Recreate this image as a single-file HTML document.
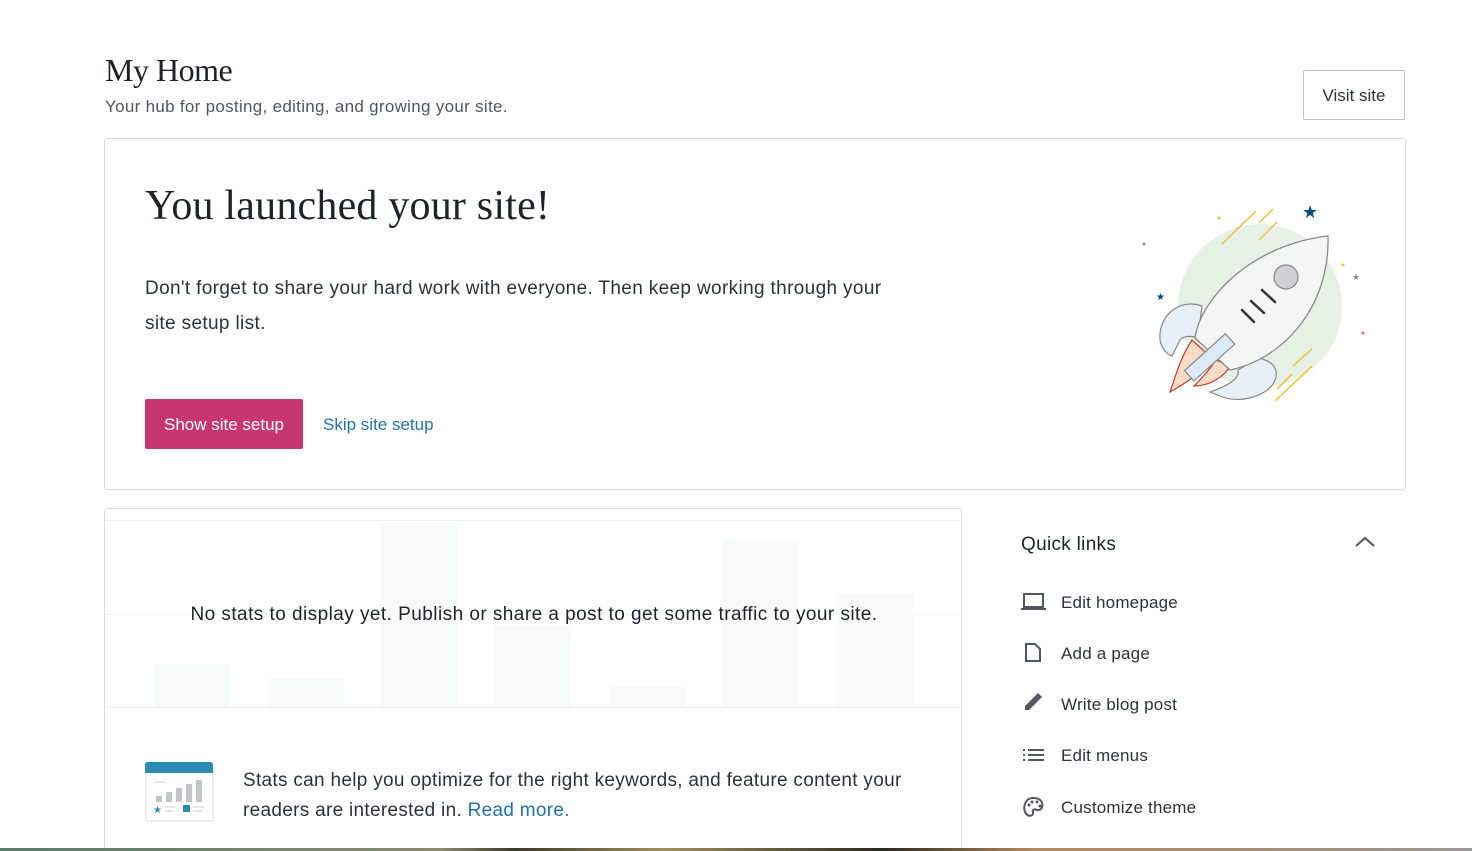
<!DOCTYPE html>
<html><head><meta charset="utf-8"><style>
*{box-sizing:border-box;margin:0;padding:0}
html,body{width:1472px;height:851px;overflow:hidden}
body{background:#fff;font-family:"Liberation Sans",sans-serif;color:#2c3338;position:relative}
.abs{position:absolute}
h1{font-family:"Liberation Serif",serif;font-weight:400}
</style></head><body>
<h1 class="abs" style="left:105px;top:52px;font-size:32px;color:#1d2327;letter-spacing:-0.5px">My Home</h1>
<div class="abs" style="left:105px;top:97px;font-size:17px;color:#50575e;letter-spacing:0.3px">Your hub for posting, editing, and growing your site.</div>
<div class="abs" style="left:1303px;top:70px;width:102px;height:50px;border:1px solid #c3c4c7;border-radius:2px;font-size:17px;color:#2c3338;text-align:center;line-height:50px">Visit site</div>

<div class="abs" style="left:104px;top:138px;width:1302px;height:352px;border:1px solid #dcdcde;border-radius:3px"></div>
<h1 class="abs" style="left:145px;top:182px;font-size:42px;color:#1d2327;letter-spacing:0.2px">You launched your site!</h1>
<div class="abs" style="left:145px;top:271px;width:770px;font-size:19px;line-height:35px;color:#2c3338;letter-spacing:0.35px">Don't forget to share your hard work with everyone. Then keep working through your site setup list.</div>
<div class="abs" style="left:145px;top:399px;width:158px;height:50px;background:#c9356e;border-radius:2px;color:#fff;font-size:17px;text-align:center;line-height:52px">Show site setup</div>
<div class="abs" style="left:323px;top:415px;font-size:17px;color:#2271b1">Skip site setup</div>

<svg class="abs" style="left:1130px;top:190px" width="250" height="230" viewBox="0 0 250 230">
<circle cx="130" cy="116" r="82" fill="#e6f0e6"/>
<g stroke="#f0c330" stroke-width="1.5"><line x1="92" y1="54" x2="126" y2="21"/><line x1="129" y1="33" x2="143" y2="19"/><line x1="129" y1="50" x2="147" y2="32"/><line x1="163" y1="176" x2="182" y2="159"/><line x1="147" y1="199" x2="162" y2="184"/><line x1="145" y1="211" x2="182" y2="176"/></g>
<text x="172" y="28" font-size="18" fill="#0a4b78" font-family="DejaVu Sans">★</text>
<text x="26" y="110" font-size="10" fill="#0a4b78" font-family="DejaVu Sans">★</text>
<text x="222" y="90" font-size="9" fill="#888" font-family="DejaVu Sans">★</text>
<circle cx="14" cy="54" r="1.5" fill="#c56fc5"/><circle cx="233" cy="143" r="1.5" fill="#c56fc5"/><circle cx="89" cy="28" r="1.5" fill="#f0c330"/><circle cx="213" cy="75" r="1.5" fill="#f0c330"/>
<path d="M72 116 C50 108 28 125 30 150 C32 160 38 165 42 166 L50 150 C54 145 62 146 68 148 Z" fill="#e8eff6" stroke="#888" stroke-width="1.2"/>
<path d="M90 206 C110 215 140 205 145 190 C150 178 140 170 128 168 L108 180 C110 188 100 195 80 202 Z" fill="#e8eff6" stroke="#888" stroke-width="1.2"/>
<path d="M62 150 C50 168 45 188 40 202 C58 192 72 182 84 170 Z" fill="#f7dcc8" stroke="#c0392b" stroke-width="1.2"/>
<path d="M86 170 C76 184 70 190 64 196 C80 196 95 186 100 176 Z" fill="#f7dcc8" stroke="#c0392b" stroke-width="1.2"/>
<path d="M198 46 C120 55 70 110 65 148 L100 180 C150 170 200 120 198 46 Z" fill="#f4f6f6" stroke="#888" stroke-width="1.3"/>
<rect x="52" y="160" width="55" height="14" fill="#dceaf6" stroke="#888" stroke-width="1.2" transform="rotate(-42 80 167)"/>
<circle cx="156" cy="87" r="12" fill="#d0d0d3" stroke="#888" stroke-width="1.2"/>
<g stroke="#333" stroke-width="2.5" stroke-linecap="round"><line x1="132" y1="100" x2="145" y2="112"/><line x1="121" y1="111" x2="134" y2="123"/><line x1="112" y1="120" x2="124" y2="132"/></g>
</svg>

<div class="abs" style="left:104px;top:508px;width:858px;height:343px;border:1px solid #dcdcde;border-bottom:none;border-radius:3px 3px 0 0;overflow:hidden">
<div class="abs" style="left:0;top:11px;width:858px;height:1px;background:#f0f0f0"></div>
<div class="abs" style="left:0;top:105px;width:858px;height:1px;background:#f0f0f0"></div>
<div class="abs" style="left:49px;top:155px;width:76px;height:43px;background:#f8f9f9"></div>
<div class="abs" style="left:163px;top:169px;width:76px;height:29px;background:#f8f9f9"></div>
<div class="abs" style="left:276px;top:14px;width:76px;height:184px;background:#f8f9f9"></div>
<div class="abs" style="left:390px;top:116px;width:76px;height:82px;background:#f8f9f9"></div>
<div class="abs" style="left:504px;top:177px;width:76px;height:21px;background:#f8f9f9"></div>
<div class="abs" style="left:618px;top:31px;width:76px;height:167px;background:#f8f9f9"></div>
<div class="abs" style="left:732px;top:84px;width:76px;height:114px;background:#f8f9f9"></div>
<div class="abs" style="left:0;top:198px;width:858px;height:1px;background:#eee"></div>
<div class="abs" style="left:0;top:95px;width:858px;text-align:center;font-size:19px;color:#1d2327;letter-spacing:0.45px">No stats to display yet. Publish or share a post to get some traffic to your site.</div>
<svg class="abs" style="left:38px;top:252px" width="72" height="62" viewBox="0 0 72 62">
<rect x="3" y="5" width="67" height="55" fill="#fff" stroke="#ddd"/>
<path d="M2 12 V4 Q2 1 5 1 H67 Q70 1 70 4 V12 Z" fill="#2b8bb5"/>
<line x1="12" y1="21" x2="22" y2="21" stroke="#ccc"/>
<g fill="#c3c4c7"><rect x="13" y="35" width="6" height="6"/><rect x="23" y="31" width="6" height="10"/><rect x="33" y="27" width="6" height="14"/><rect x="43" y="23" width="6" height="18"/><rect x="53" y="19" width="6" height="22"/></g>
<text x="10" y="52" font-size="10" fill="#2b8bb5" font-family="DejaVu Sans">★</text>
<rect x="40" y="44" width="7" height="7" fill="#2b8bb5"/>
<g stroke="#ccc"><line x1="22" y1="46" x2="32" y2="46"/><line x1="22" y1="50" x2="30" y2="50"/><line x1="50" y1="46" x2="61" y2="46"/><line x1="50" y1="50" x2="59" y2="50"/></g>
</svg>
<div class="abs" style="left:138px;top:257px;width:700px;font-size:19px;line-height:30px;color:#2c3338;letter-spacing:0.3px">Stats can help you optimize for the right keywords, and feature content your readers are interested in. <span style="color:#2271b1">Read more.</span></div>
</div>

<div class="abs" style="left:1021px;top:534px;font-size:19px;color:#1d2327;letter-spacing:0.3px">Quick links</div>
<svg class="abs" style="left:1354px;top:535px" width="22" height="14"><path d="M2 11 L11 3 L20 11" fill="none" stroke="#50575e" stroke-width="2"/></svg>
<div class="abs" style="left:1061px;top:589px;font-size:17px;line-height:28px;color:#2c3338;letter-spacing:0.2px">
<div style="height:51px">Edit homepage</div><div style="height:51px">Add a page</div><div style="height:51px">Write blog post</div><div style="height:52px">Edit menus</div><div>Customize theme</div></div>
<svg class="abs" style="left:1020px;top:590px" width="30" height="235" viewBox="0 0 30 235" fill="none" stroke="#50575e" stroke-width="2">
<rect x="4" y="4" width="19" height="13"/><line x1="1" y1="19" x2="26" y2="19"/>
<path d="M6 54 H15 L20 59 V71 H6 Z"/>
<path d="M5 120 L5 116 L18 103 L22 107 L9 120 Z" fill="#50575e" stroke="none"/>
<g stroke-width="2"><line x1="3" y1="160" x2="5" y2="160"/><line x1="8" y1="160" x2="24" y2="160"/><line x1="3" y1="165" x2="5" y2="165"/><line x1="8" y1="165" x2="24" y2="165"/><line x1="3" y1="170" x2="5" y2="170"/><line x1="8" y1="170" x2="24" y2="170"/></g>
<path d="M13 208 C5 208 3 217 5 222 C8 228 14 226 13 222 C12 219 15 219 17 220 C23 221 24 213 20 210 C18 208 15 208 13 208 Z"/>
<g fill="#50575e" stroke="none"><circle cx="9" cy="215" r="1.5"/><circle cx="12" cy="212" r="1.5"/><circle cx="17" cy="212" r="1.5"/><circle cx="20" cy="216" r="1.5"/></g>
</svg>
<div class="abs" style="left:0;top:848px;width:1472px;height:3px;background:linear-gradient(90deg,#5a7a6a,#8a8a70 30%,#3a3a2a 35%,#a09060 45%,#2a2a20 60%,#b08860 70%,#a09080 90%,#999)"></div>
</body></html>
